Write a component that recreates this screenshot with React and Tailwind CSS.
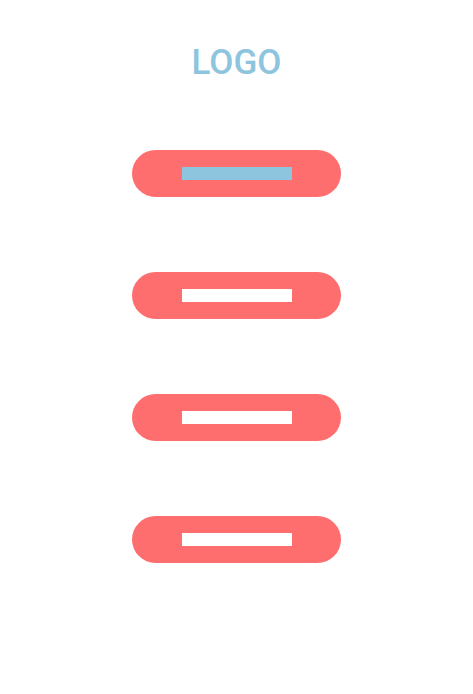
export default function App() {
  const items = [true, false, false, false];
  return (
    <div className="min-h-[694px] bg-white flex flex-col items-center font-['Roboto',sans-serif]">
      <h1 className="mt-[46px] text-[35px] leading-[34px] font-medium text-[#8dc4de]">LOGO</h1>
      <nav className="mt-[70px] flex flex-col gap-[75px]">
        {items.map((active, i) => (
          <a
            key={i}
            href="#"
            className="w-[209px] h-[47px] rounded-full bg-[#ff6e6e] flex items-center justify-center"
          >
            <span className={`block w-[110px] h-[13px] ${active ? 'bg-[#8dc4de]' : 'bg-white'}`} />
          </a>
        ))}
      </nav>
    </div>
  );
}
